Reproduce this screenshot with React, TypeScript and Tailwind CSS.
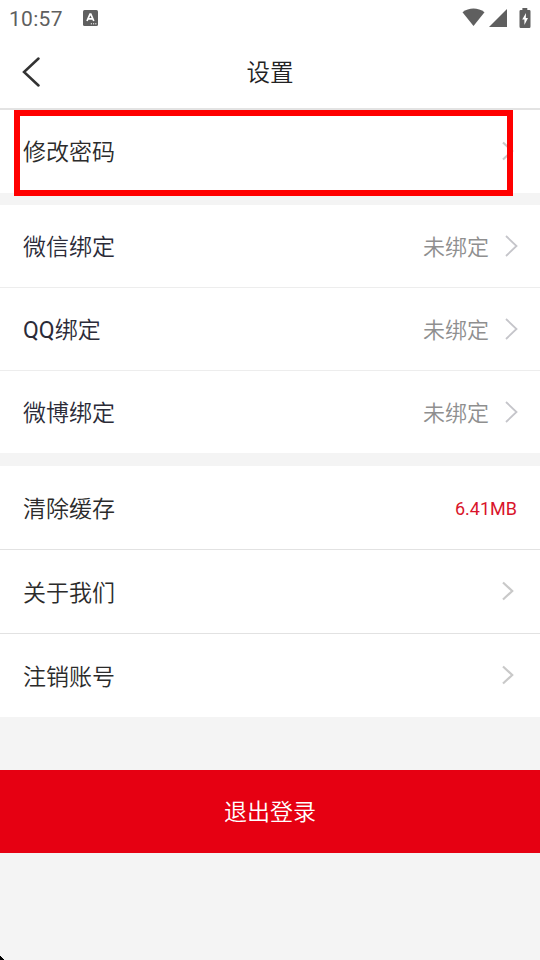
import type { ReactNode } from "react";

interface RowProps {
  label: ReactNode;
  className: string;
  labelClassName?: string;
  children: ReactNode;
}

function Row({ label, className, labelClassName = "pt-1 text-[#2b2b2b]", children }: RowProps) {
  return (
    <div className={`flex items-center justify-between bg-white pb-0.5 pl-[23px] ${className}`}>
      <span className={`text-[23px] leading-[34px] ${labelClassName}`}>{label}</span>
      {children}
    </div>
  );
}

function SmallChevron() {
  return (
    <svg className="mr-[26px] h-5 w-3" viewBox="0 0 12 20" fill="none" aria-hidden>
      <path d="M1 1.5L10.2 10L1 18.5" stroke="#c9c9c9" strokeWidth="2.2" />
    </svg>
  );
}

function BindingStatus() {
  return (
    <div className="flex items-center">
      <span className="pt-1.5 text-[22px] leading-[34px] text-[#8f8f8f]">未绑定</span>
      <svg className="ml-4 mr-[22px] mt-0.5 h-[22px] w-[13px]" viewBox="0 0 13 22" fill="none" aria-hidden>
        <path d="M1 1L11.5 11L1 21" stroke="#c5c5ca" strokeWidth="1.8" />
      </svg>
    </div>
  );
}

function StatusBar() {
  return (
    <div className="flex h-[38px] items-center bg-white px-[9px] pb-[3px] font-normal text-[#5f5f5f]">
      <span className="pt-0.5 text-[21px] leading-6 tracking-[0.3px]">10:57</span>
      <svg className="ml-5 h-4 w-[15px]" viewBox="0 0 15 16" aria-hidden>
        <rect width="15" height="16" rx="1.5" fill="#5f5f5f" />
        <path d="M4 11L7 4.2H7.8L10.8 11M5.2 8.8H9.6" fill="none" stroke="#ffffff" strokeWidth="1.7" />
        <path d="M7.8 13.8h1.2M10 13.8h1.2M12.2 13.8h1.2" stroke="#ffffff" strokeWidth="1" />
      </svg>
      <svg className="ml-auto h-[19px] w-[23px]" viewBox="0 0 23 19" fill="#5f5f5f" aria-hidden>
        <path d="M0.5 4.2C7 -0.6 16 -0.6 22.5 4.2L11.5 18Z" />
      </svg>
      <svg className="ml-1 h-[18px] w-[18px]" viewBox="0 0 18 18" fill="#5f5f5f" aria-hidden>
        <path d="M18 0V18H0Z" />
      </svg>
      <svg className="ml-3 h-5 w-3" viewBox="0 0 12 20" aria-hidden>
        <path
          d="M3.4 0H8.3V2H10.3Q11.5 2 11.5 3.2V18.5Q11.5 20 10.3 20H1.7Q0.5 20 0.5 18.5V3.2Q0.5 2 1.7 2H3.4Z"
          fill="#5f5f5f"
        />
        <path d="M7 5L3.2 11.5H5.4V17L9 10H6.8Z" fill="#ffffff" />
      </svg>
    </div>
  );
}

export default function App() {
  return (
    <main className="relative flex h-[960px] w-[540px] flex-col overflow-hidden bg-[#f4f4f4] font-['Roboto','Noto_Sans_CJK_SC',sans-serif] font-[350]">
      <StatusBar />
      <header className="grid h-[72px] grid-cols-[1fr_auto_1fr] items-center border-b-2 border-[#e3e3e3] bg-white pb-[3px]">
        <svg className="ml-[22px] h-[30px] w-[18px]" viewBox="0 0 18 30" fill="none" aria-hidden>
          <path d="M16.5 1.5L2 15L16.5 28.5" stroke="#333333" strokeWidth="2.5" strokeLinecap="round" />
        </svg>
        <h1 className="pt-0.5 text-[23.5px] leading-[34px] text-[#222222]">设置</h1>
      </header>

      <Row label="修改密码" className="h-[83px]">
        <SmallChevron />
      </Row>

      <section className="mt-3">
        <Row label="微信绑定" labelClassName="pt-1.5 text-[#2b2b38]" className="h-[83px] border-b border-[#ededed]">
          <BindingStatus />
        </Row>
        <Row
          label={<><span className="font-normal">QQ</span>绑定</>}
          labelClassName="pt-1.5 text-[#2b2b38]"
          className="h-[83px] border-b border-[#ededed]"
        >
          <BindingStatus />
        </Row>
        <Row label="微博绑定" labelClassName="pt-1.5 text-[#2b2b38]" className="h-[82px]">
          <BindingStatus />
        </Row>
      </section>

      <section className="mt-[13px]">
        <Row label="清除缓存" labelClassName="pt-1.5 text-[#2b2b2b]" className="h-[84px] border-b border-[#e2e2e2]">
          <span className="mr-[23px] mt-1 text-lg font-normal text-[#d9142b]">6.41MB</span>
        </Row>
        <Row label="关于我们" labelClassName="pt-1.5 text-[#2b2b2b]" className="h-[84px] border-b border-[#e2e2e2]">
          <SmallChevron />
        </Row>
        <Row label="注销账号" labelClassName="pt-1.5 text-[#2b2b2b]" className="h-[83px]">
          <SmallChevron />
        </Row>
      </section>

      <button className="mt-[53px] h-[83px] w-full bg-[#e60012] pt-1 text-[23px] text-white">退出登录</button>

      {/* highlight around the password row */}
      <div className="absolute left-3.5 top-[110px] h-[86px] w-[499px] border-[6px] border-[#ff0000]" />
      <svg className="absolute bottom-0 left-0 h-1 w-1" viewBox="0 0 4 4" aria-hidden>
        <path d="M0 0H1V1H2V2H3V3H4V4H0Z" fill="#000000" />
      </svg>
    </main>
  );
}
